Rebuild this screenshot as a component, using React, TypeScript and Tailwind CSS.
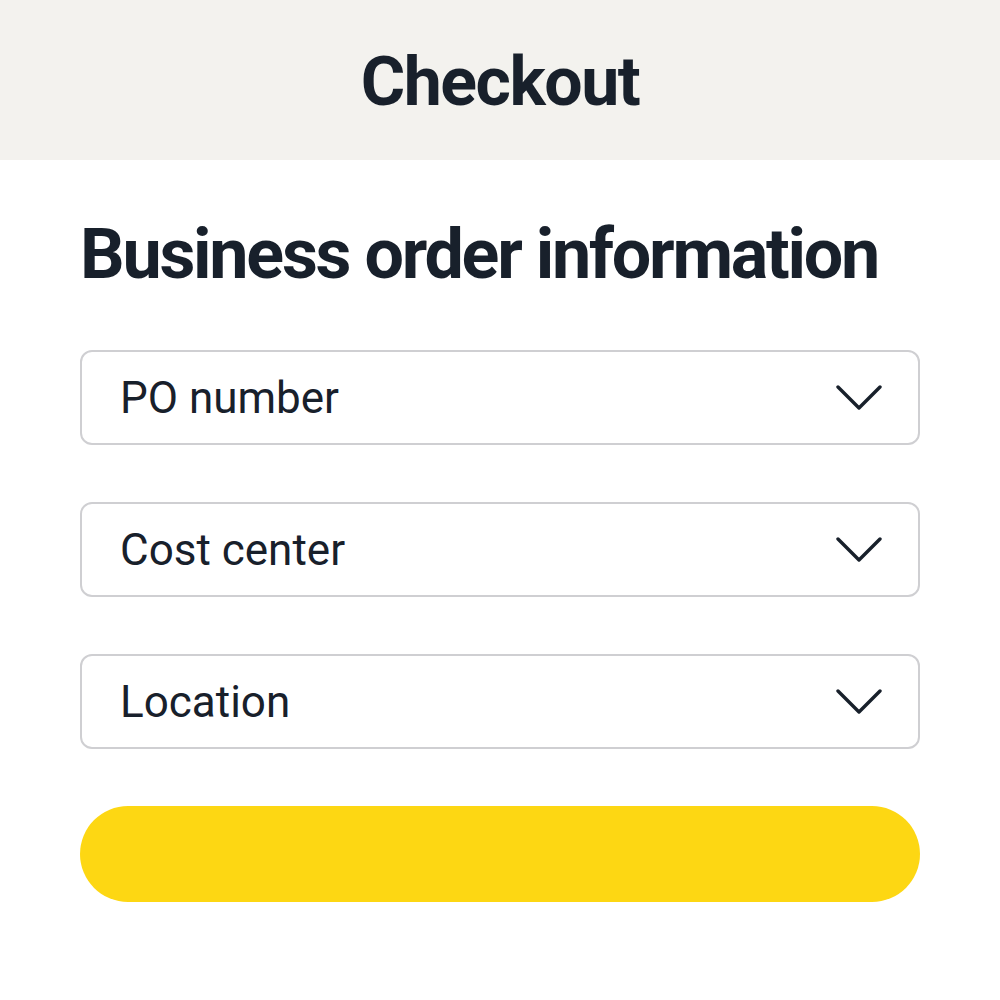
const fields = ['PO number', 'Cost center', 'Location'];

function Chevron() {
  return (
    <svg width="46" height="25" viewBox="0 0 46 25" fill="none" stroke="currentColor" strokeWidth="3.4" strokeLinecap="round" strokeLinejoin="round">
      <polyline points="2,2 23,23 44,2" />
    </svg>
  );
}

export default function App() {
  return (
    <div className="min-h-screen w-full bg-white text-[#18202b] font-['Roboto',sans-serif]">
      <header className="flex h-[160px] items-center justify-center bg-[#f3f2ee] pt-[3px]">
        <h1 className="text-[68px] font-bold leading-none tracking-[-1.5px]">Checkout</h1>
      </header>

      <main className="px-[80px]">
        <h2 className="mt-[59px] whitespace-nowrap text-[70px] font-bold leading-none tracking-[-2.25px]">
          Business order information
        </h2>

        <div className="mt-[61px] flex flex-col gap-[57px]">
          {fields.map((label) => (
            <div
              key={label}
              className="flex h-[95px] items-center justify-between rounded-[12px] border-2 border-[#cfcfd2] pl-[38px] pr-[36px]"
            >
              <span className="text-[44px] leading-none">{label}</span>
              <Chevron />
            </div>
          ))}

          <button className="h-[96px] w-full rounded-full bg-[#fdd713]" />
        </div>
      </main>
    </div>
  );
}
